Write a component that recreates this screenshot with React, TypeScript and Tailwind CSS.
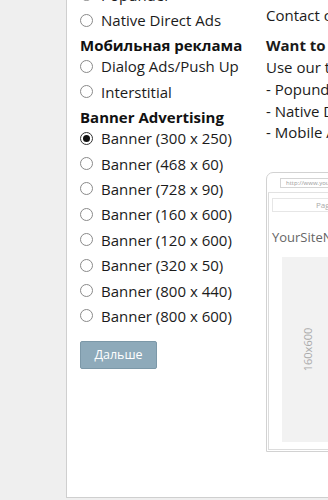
import React from "react";

const font = { fontFamily: '"Open Sans", "Noto Sans", sans-serif' };

function Radio({ label, checked = false }: { label: string; checked?: boolean }) {
  return (
    <div className="flex items-center h-[20px] mb-[5.4px]">
      <span
        className={
          "w-[13px] h-[13px] rounded-full border bg-white flex items-center justify-center shrink-0 " +
          (checked ? "border-[#333]" : "border-[#8a8a8a]")
        }
      >
        {checked ? <span className="w-[7px] h-[7px] rounded-full bg-[#111]" /> : null}
      </span>
      <span className="ml-[8px] text-[15px] leading-[20px] text-[#1b1b1b] whitespace-nowrap">{label}</span>
    </div>
  );
}

function Heading({ children }: { children: React.ReactNode }) {
  return (
    <div className="mt-[1px] h-[21px] text-[15px] leading-[20px] font-bold text-[#111] whitespace-nowrap">
      {children}
    </div>
  );
}

export default function App() {
  return (
    <div className="w-[328px] h-[500px] overflow-hidden bg-[#efefef] flex" style={font}>
      <div className="w-[66px] shrink-0" />
      <div className="w-[262px] h-[498px] shrink-0 bg-white border-l border-b border-[#cfcfcf] overflow-hidden flex">
        <div className="w-[199px] shrink-0 pl-[13px] -mt-[15.4px]">
          <Radio label="Popunder" />
          <Radio label="Native Direct Ads" />
          <Heading>Мобильная реклама</Heading>
          <Radio label="Dialog Ads/Push Up" />
          <Radio label="Interstitial" />
          <Heading>Banner Advertising</Heading>
          <Radio label="Banner (300 x 250)" checked />
          <Radio label="Banner (468 x 60)" />
          <Radio label="Banner (728 x 90)" />
          <Radio label="Banner (160 x 600)" />
          <Radio label="Banner (120 x 600)" />
          <Radio label="Banner (320 x 50)" />
          <Radio label="Banner (800 x 440)" />
          <Radio label="Banner (800 x 600)" />
          <button
            className="mt-[15px] w-[77px] h-[28px] rounded-[2px] bg-[#8eaaba] border border-[#7c98a8] text-white text-[12.5px] flex items-center justify-center"
            style={font}
          >
            Дальше
          </button>
        </div>
        <div className="w-[300px] shrink-0 -mt-[17px] text-[15px] leading-[21.7px] text-[#1b1b1b]">
          <div className="whitespace-nowrap">Banners and other formats</div>
          <div className="whitespace-nowrap">Contact customer support</div>
          <div className="mt-[9px] font-bold whitespace-nowrap">Want to get more?</div>
          <div className="whitespace-nowrap">Use our tools to promote</div>
          <div className="whitespace-nowrap">- Popunder</div>
          <div className="whitespace-nowrap">- Native Direct Ads</div>
          <div className="whitespace-nowrap">- Mobile Ads</div>
          <div className="mt-[28px] w-[260px] h-[280px] border border-[#d2d2d2] rounded-tl-[7px] p-[1px] bg-white">
            <div className="h-full flex flex-col">
              <div className="h-[19px] flex items-center pl-[12px] border-b border-[#e2e2e2]">
                <div className="w-[200px] h-[10px] border border-[#d4d4d4] flex items-center pl-[5px]">
                  <span className="text-[6px] leading-[6px] text-[#999]">http://www.yoursite.com</span>
                </div>
              </div>
              <div className="flex-1 border-l border-b border-[#dcdcdc] flex flex-col">
                <div className="mt-[5px] ml-[3px] h-[14px] border border-[#e6e6e6] flex items-center pl-[43px]">
                  <span className="text-[8px] leading-[8px] text-[#aaa]">Page</span>
                </div>
                <div className="pl-[3px] mt-[17px] text-[13px] leading-[16px] text-[#666] whitespace-nowrap">
                  YourSiteName
                </div>
                <div className="ml-[13px] mt-[12px] w-[52px] h-[185px] bg-[#f2f2f2] flex items-center justify-center">
                  <span className="block -rotate-90 text-[11px] leading-[11px] text-[#aaa] whitespace-nowrap">
                    160x600
                  </span>
                </div>
              </div>
            </div>
          </div>
        </div>
      </div>
    </div>
  );
}
